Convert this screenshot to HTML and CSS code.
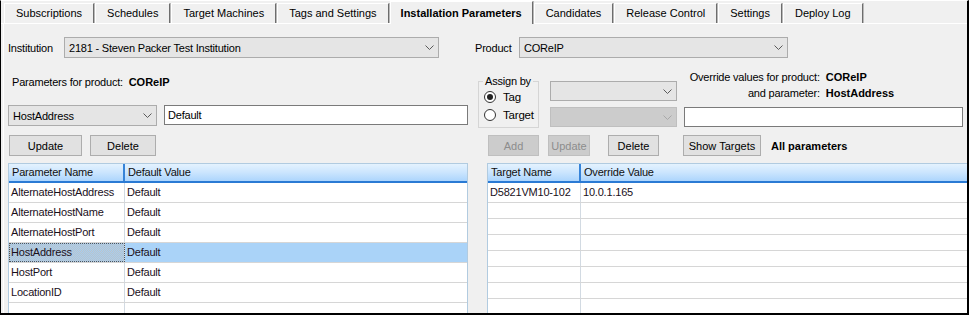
FILE: index.html
```
<!DOCTYPE html>
<html lang="en">
<head>
    <meta charset="UTF-8">
    <title>Installation Parameters</title>
    <link rel="stylesheet" href="styles.css">
</head>
<body>
    <div class="window">
        <div class="tabs">
            <div class="tab">Subscriptions</div>
            <div class="tab">Schedules</div>
            <div class="tab">Target Machines</div>
            <div class="tab">Tags and Settings</div>
            <div class="tab active">Installation Parameters</div>
            <div class="tab">Candidates</div>
            <div class="tab">Release Control</div>
            <div class="tab">Settings</div>
            <div class="tab">Deploy Log</div>
        </div>

        <div class="page">
            <div class="top-row">
                <span class="lbl lbl-inst">Institution</span>
                <div class="combo combo-inst">
                    <span>2181 - Steven Packer Test Institution</span>
                    <svg class="chev" width="9" height="5" viewBox="0 0 9 5"><path d="M0.5 0.5 L4.5 4.5 L8.5 0.5" fill="none" stroke="#5a5a5a"/></svg>
                </div>
                <span class="lbl lbl-prod">Product</span>
                <div class="combo combo-prod">
                    <span>COReIP</span>
                    <svg class="chev" width="9" height="5" viewBox="0 0 9 5"><path d="M0.5 0.5 L4.5 4.5 L8.5 0.5" fill="none" stroke="#5a5a5a"/></svg>
                </div>
            </div>

            <div class="main">
                <!-- parameters for the product -->
                <div class="left">
                    <div class="param-title">Parameters for product:&nbsp; <b>COReIP</b></div>
                    <div class="edit-row">
                        <div class="combo combo-param">
                            <span>HostAddress</span>
                            <svg class="chev" width="9" height="5" viewBox="0 0 9 5"><path d="M0.5 0.5 L4.5 4.5 L8.5 0.5" fill="none" stroke="#5a5a5a"/></svg>
                        </div>
                        <div class="textbox tb-default">Default</div>
                    </div>
                    <div class="btn-row">
                        <button class="btn btn-update">Update</button>
                        <button class="btn btn-delete">Delete</button>
                    </div>
                    <div class="grid grid-params">
                        <div class="grid-head">
                            <div class="hcell">Parameter Name</div>
                            <div class="hcell">Default Value</div>
                        </div>
                        <div class="grid-row"><div class="cell">AlternateHostAddress</div><div class="cell">Default</div></div>
                        <div class="grid-row"><div class="cell">AlternateHostName</div><div class="cell">Default</div></div>
                        <div class="grid-row"><div class="cell">AlternateHostPort</div><div class="cell">Default</div></div>
                        <div class="grid-row selected"><div class="cell focus">HostAddress</div><div class="cell">Default</div></div>
                        <div class="grid-row"><div class="cell">HostPort</div><div class="cell">Default</div></div>
                        <div class="grid-row"><div class="cell">LocationID</div><div class="cell">Default</div></div>
                        <div class="grid-row"><div class="cell"></div><div class="cell"></div></div>
                    </div>
                </div>

                <!-- overrides per tag / target -->
                <div class="right">
                    <div class="assign-row">
                        <fieldset class="assign">
                            <legend>Assign by</legend>
                            <label class="radio"><span class="dot checked"></span>Tag</label>
                            <label class="radio"><span class="dot"></span>Target</label>
                        </fieldset>
                        <div class="pick-col">
                            <div class="combo combo-pick">
                                <span></span>
                                <svg class="chev" width="9" height="5" viewBox="0 0 9 5"><path d="M0.5 0.5 L4.5 4.5 L8.5 0.5" fill="none" stroke="#5a5a5a"/></svg>
                            </div>
                            <div class="combo combo-pick disabled">
                                <span></span>
                                <svg class="chev" width="9" height="5" viewBox="0 0 9 5"><path d="M0.5 0.5 L4.5 4.5 L8.5 0.5" fill="none" stroke="#a8a8a8"/></svg>
                            </div>
                        </div>
                        <div class="override">
                            <div class="ov-line"><span class="ov-lbl">Override values for product:</span><b>COReIP</b></div>
                            <div class="ov-line"><span class="ov-lbl">and parameter:</span><b>HostAddress</b></div>
                            <div class="textbox tb-override"></div>
                        </div>
                    </div>
                    <div class="btn-row right-btns">
                        <button class="btn btn-add" disabled>Add</button>
                        <button class="btn btn-upd2" disabled>Update</button>
                        <button class="btn btn-del2">Delete</button>
                        <button class="btn btn-show">Show Targets</button>
                        <b class="all-params">All parameters</b>
                    </div>
                    <div class="grid grid-targets">
                        <div class="grid-head">
                            <div class="hcell">Target Name</div>
                            <div class="hcell">Override Value</div>
                        </div>
                        <div class="grid-row"><div class="cell">D5821VM10-102</div><div class="cell">10.0.1.165</div></div>
                        <div class="grid-row empty"><div class="cell"></div><div class="cell"></div></div>
                        <div class="grid-row empty"><div class="cell"></div><div class="cell"></div></div>
                        <div class="grid-row empty"><div class="cell"></div><div class="cell"></div></div>
                        <div class="grid-row empty"><div class="cell"></div><div class="cell"></div></div>
                        <div class="grid-row empty"><div class="cell"></div><div class="cell"></div></div>
                        <div class="grid-row empty"><div class="cell"></div><div class="cell"></div></div>
                        <div class="grid-row empty"><div class="cell"></div><div class="cell"></div></div>
                    </div>
                </div>
            </div>
        </div>
    </div>
</body>
</html>
```

FILE: styles.css
```
* {
    box-sizing: border-box;
}

body {
    margin: 0;
    font-family: 'Liberation Sans', Arial, sans-serif;
    font-size: 11px;
    letter-spacing: -0.2px;
    color: #000;
    background: #f0f0f0;
}

b {
    letter-spacing: 0;
}

.window {
    width: 969px;
    height: 315px;
    overflow: hidden;
    background: #f0f0f0;
    border-top: 1px solid #fff;
    border-left: 1px solid #000;
    border-right: 2px solid #000;
    border-bottom: 2px solid #000;
}

/* tab strip */
.tabs {
    display: flex;
    align-items: flex-end;
    height: 23px;
    padding-left: 3px;
    border-bottom: 1px solid #fff;
}

.tab {
    height: 20px;
    line-height: 19px;
    padding: 0 11px;
    margin-right: 1px;
    border-top: 1px solid #fff;
    border-left: 1px solid #fff;
    border-right: 1px solid #6d6d6d;
    box-shadow: 1px 0 0 #b9b9b9;
    background: #f0f0f0;
    white-space: nowrap;
    letter-spacing: 0;
}

.tab.active {
    height: 23px;
    line-height: 22px;
    margin-bottom: -1px;
    padding: 0 10px;
    font-weight: bold;
}

/* tab page */
.page {
    margin-left: 2px;
    height: 290px;
    border-left: 1px solid #fff;
    padding: 13px 0 0 4px;
}

.top-row {
    display: flex;
    align-items: center;
    height: 21px;
}

.lbl-inst {
    width: 56px;
}

.lbl-prod {
    width: 44px;
    margin-left: 36px;
}

.combo {
    display: flex;
    align-items: center;
    justify-content: space-between;
    height: 21px;
    padding: 0 4px 0 4px;
    background: #e5e5e5;
    border: 1px solid #acacac;
    white-space: nowrap;
}

.combo.disabled {
    background: #cccccc;
    border-color: #bfbfbf;
}

.chev {
    flex: none;
}

.combo-inst {
    width: 375px;
}

.combo-prod {
    width: 269px;
}

.main {
    display: flex;
}

/* left column */
.left {
    width: 460px;
    flex: none;
}

.param-title {
    margin-top: 18px;
    padding-left: 4px;
    line-height: 13px;
}

.edit-row {
    display: flex;
    margin-top: 16px;
}

.combo-param {
    width: 149px;
}

.textbox {
    height: 20px;
    line-height: 18px;
    padding-left: 3px;
    background: #fff;
    border: 1px solid #7a7a7a;
}

.tb-default {
    width: 304px;
    margin-left: 7px;
}

.btn-row {
    display: flex;
    align-items: center;
    margin-top: 9px;
}

.btn {
    height: 21px;
    padding: 0;
    font: inherit;
    color: #000;
    background: #e1e1e1;
    border: 1px solid #adadad;
}

.btn:disabled {
    background: #cccccc;
    border-color: #bfbfbf;
    color: #8d8d8d;
}

.btn-update {
    width: 73px;
    margin-left: 1px;
}

.btn-delete {
    width: 66px;
    margin-left: 8px;
}

/* grids */
.grid {
    margin-top: 7px;
    background: #fff;
    border: 1px solid #b1cbe0;
}

.grid-head,
.grid-row {
    display: grid;
}

.grid-params .grid-head,
.grid-params .grid-row {
    grid-template-columns: 116px 1fr;
}

.grid-targets .grid-head,
.grid-targets .grid-row {
    grid-template-columns: 93px 1fr;
}

.grid-head {
    height: 19px;
    background: linear-gradient(#e4f2fe, #cbe5fe 50%, #acd5fd);
    border-bottom: 2px solid #2a7ad4;
}

.hcell {
    padding-left: 3px;
    line-height: 17px;
    color: #111;
}

.hcell:first-child {
    border-right: 2px solid #3683d8;
}

.grid-row {
    height: 20px;
    border-bottom: 1px solid #d6d6d6;
}

.grid-row.empty {
    height: 16px;
}

.cell {
    padding-left: 2px;
    line-height: 19px;
    color: #1a0f1a;
    white-space: nowrap;
}

.cell:first-child {
    border-right: 1px solid #d2dae2;
}

.grid-row.selected {
    background: #aad3f8;
}

.cell.focus {
    background: repeating-conic-gradient(#b9c4cc 0 25%, #a8cdef 0 50%) 0 0 / 2px 2px;
    outline: 1px dotted #555;
    outline-offset: -1px;
}

.grid-params {
    width: 460px;
}

/* right column */
.right {
    margin-left: 10px;
    flex: none;
    width: 500px;
}

.assign-row {
    display: flex;
    align-items: flex-start;
}

.assign {
    margin: 17px 0 0 0;
    padding: 0 4px 0 5px;
    width: 59px;
    height: 53px;
    border: 1px solid #d5d5d5;
}

.assign legend {
    padding: 0 2px;
    margin-left: -1px;
    line-height: 13px;
}

.radio {
    display: flex;
    align-items: center;
    height: 18px;
    gap: 7px;
    font-size: 11.5px;
}

.dot {
    width: 12px;
    height: 12px;
    border-radius: 50%;
    border: 1px solid #333;
    background: #fff;
    display: flex;
    align-items: center;
    justify-content: center;
}

.dot.checked::after {
    content: "";
    width: 6px;
    height: 6px;
    border-radius: 50%;
    background: #222;
}

.pick-col {
    display: flex;
    flex-direction: column;
    gap: 6px;
    margin: 23px 0 0 11px;
}

.combo-pick {
    width: 127px;
    height: 20px;
}

.override {
    margin: 12px 0 0 7px;
    width: 279px;
}

.ov-line {
    display: flex;
    gap: 6px;
    line-height: 14px;
    margin-bottom: 2px;
}

.ov-lbl {
    width: 136px;
    text-align: right;
}

.tb-override {
    margin-top: 7px;
    width: 279px;
}

.right-btns {
    margin-top: 7px;
}

.btn-add {
    width: 51px;
    margin-left: 10px;
}

.btn-upd2 {
    width: 42px;
    margin-left: 9px;
}

.btn-del2 {
    width: 51px;
    margin-left: 18px;
}

.btn-show {
    width: 78px;
    margin-left: 24px;
}

.all-params {
    margin-left: 10px;
}

.grid-targets {
    margin-left: 9px;
    width: 500px;
    border-right: none;
}
```
